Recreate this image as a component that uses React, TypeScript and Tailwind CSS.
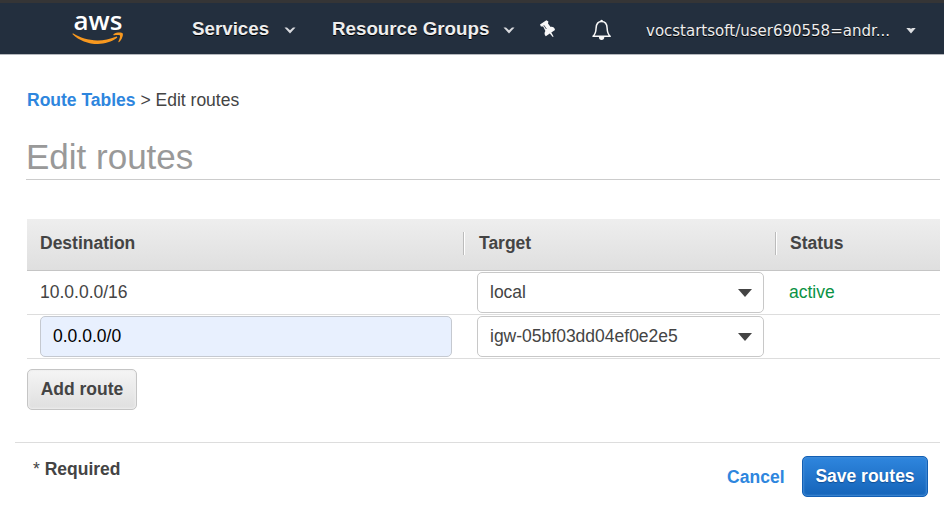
function NavCaret({ className }: { className: string }) {
  return (
    <svg className={className} width="12" height="8" viewBox="0 0 12 8">
      <path d="M0.5 0.5 L3 0.5 L6 3.2 L9 0.5 L11.5 0.5 L6 6.5 Z" fill="#d8dade" />
    </svg>
  );
}

function Logo() {
  return (
    <div className="ml-[71px] w-[54px] pt-[7px]">
      <div className="flex h-[20px] items-center justify-center font-['Open_Sans',sans-serif] text-[26px] leading-[20px] font-semibold text-white [text-shadow:none]">
        aws
      </div>
      <svg className="block" width="54" height="16" viewBox="0 0 54 16">
        <path
          d="M1.6 4.2 C1.2 3.7 1.7 3.2 2.4 3.6 C9 7.6 17 10.4 26.5 10.4 C33 10.4 39 9 44.8 6.7 C46 6.2 46.8 7.3 45.8 8.1 C41 11.8 33.5 14 27 14 C17 14 8 10.4 1.6 4.2 Z"
          fill="#f7981f"
        />
        <path
          d="M42.6 4.2 C45.8 2 50.8 2.4 51.6 3.3 C52.6 4.6 51.2 9.4 48.2 12 C47.6 12.4 47.2 12.1 47.4 11.5 C48.3 9.5 49.5 6.2 48.9 5.4 C48.2 4.6 44.9 5 43.2 5.2 C42.3 5.2 42 4.7 42.6 4.2 Z"
          fill="#f7981f"
        />
      </svg>
    </div>
  );
}

function Header() {
  return (
    <header className="flex h-[55px] items-start border-t-[3px] border-b border-t-[#353536] border-b-[#b5b8bd] bg-[#232f3e] text-[18.75px] font-bold text-[#eee] [text-shadow:0_1px_0_#000]">
      <Logo />
      <span className="ml-[67px] w-[92px] pt-[16px] leading-[20px] whitespace-nowrap">Services</span>
      <NavCaret className="mt-[24px]" />
      <span className="ml-[36px] w-[171px] pt-[16px] leading-[20px] whitespace-nowrap">Resource Groups</span>
      <NavCaret className="mt-[24px]" />
      <svg className="mt-[16px] ml-[24px]" width="18" height="19" viewBox="0 0 18 19">
        <path
          d="M1 5.6 L7.4 1.3 L9.4 2.6 L9 4.4 L11.6 7.9 C13.8 7.6 15.6 8.4 16 11 L12.3 13.5 L14.6 17.5 L13.8 18 L10.8 14.6 L6.8 17.3 C5.2 15.8 5.2 13.6 6.4 12 L4.2 7.6 L1.9 7.5 Z"
          fill="#f8f8f8"
        />
        <path d="M4.8 6.2 L7.4 10" stroke="#232f3e" strokeWidth="0.8" fill="none" />
      </svg>
      <svg className="mt-[16px] ml-[35px]" width="20" height="22" viewBox="0 0 20 22">
        <path
          d="M1 17.3 C3.3 15.4 3.9 13.3 4.1 9 C4.3 4.8 6.2 2.6 9.6 2.6 C13 2.6 14.9 4.8 15.1 9 C15.3 13.3 15.9 15.4 18.2 17.3 Z"
          fill="none"
          stroke="#f8f8f8"
          strokeWidth="1.5"
          strokeLinejoin="round"
        />
        <path d="M8.1 2.4 A1.5 1.6 0 0 1 11.1 2.4 M6.9 18 A2.7 3 0 0 0 12.3 18 Z" fill="#f8f8f8" />
      </svg>
      <span className="ml-[34px] w-[260px] pt-[18px] font-['DejaVu_Sans',sans-serif] text-[15px] leading-[20px] font-normal whitespace-nowrap">
        vocstartsoft/user690558=andr...
      </span>
      <svg className="mt-[25px]" width="10" height="6" viewBox="0 0 10 6">
        <path d="M0.3 0 H3.5 L5 0.8 L6.5 0 H9.7 L5 5.5 Z" fill="#dddfe2" />
      </svg>
    </header>
  );
}

function Select({ value }: { value: string }) {
  return (
    <div className="flex h-[41px] w-[287px] items-center justify-between rounded-[5px] border border-[#c8c8c8] bg-white pr-[11px] pl-[12px]">
      <span className="pb-[2px]">{value}</span>
      <svg width="14" height="8" viewBox="0 0 14 8">
        <path d="M0 0 H14 L7 8 Z" fill="#444" />
      </svg>
    </div>
  );
}

function Divider() {
  return <div className="h-[23px] w-[2px] border-l border-l-[#bbb] bg-white" />;
}

export default function App() {
  return (
    <div className="h-[516px] w-[944px] overflow-hidden bg-white font-['Liberation_Sans',Arial,sans-serif] text-[17.5px] leading-[20px] text-[#444]">
      <Header />
      <main className="pt-[35px] pr-[4px] pl-[27px]">
        <nav className="h-[20px] whitespace-nowrap">
          <a className="font-bold text-[#2e86de]">Route Tables</a> &gt; Edit routes
        </nav>
        <h1 className="-ml-px mt-[27px] h-[43px] border-b border-[#ccc] text-[35px] leading-[40px] text-[#999]">
          Edit routes
        </h1>
        <section className="mt-[39px]">
          <div className="flex h-[52px] items-center border-b border-[#c5c5c5] bg-linear-to-b from-[#eee] to-[#dfdfdf] pb-[3px] pl-[13px] font-bold">
            <span className="w-[423px]">Destination</span>
            <Divider />
            <span className="ml-[14px] w-[296px]">Target</span>
            <Divider />
            <span className="ml-[13px]">Status</span>
          </div>
          <div className="flex h-[44px] items-center border-b border-[#ddd] pl-[13px]">
            <span className="w-[437px] pb-[2px]">10.0.0.0/16</span>
            <Select value="local" />
            <span className="ml-[25px] pb-[2px] text-[#0a9245]">active</span>
          </div>
          <div className="flex h-[44px] items-center border-b border-[#ddd] pl-[13px]">
            <div className="mr-[25px] flex h-[41px] w-[412px] items-center rounded-[5px] border border-[#c5c9d0] bg-[#e8f0fe] pb-[2px] pl-[12px] text-black">
              0.0.0.0/0
            </div>
            <Select value="igw-05bf03dd04ef0e2e5" />
          </div>
          <button className="mt-[10px] block h-[41px] w-[110px] rounded-[5px] border border-[#c5c5c5] bg-linear-to-b from-[#f5f5f5] to-[#dfdfdf] pb-px font-bold whitespace-nowrap shadow-[inset_0_0_2px_1px_#eee]">
            Add route
          </button>
        </section>
      </main>
      <footer className="mt-[32px] mr-[4px] ml-[15px] flex items-start border-t border-[#ddd] pr-[12px]">
        <div className="mt-[16px] ml-[18px] flex-1">
          * <b>Required</b>
        </div>
        <a className="mt-[24px] mr-[17.5px] font-bold text-[#2e86de]">Cancel</a>
        <button className="mt-[13px] h-[41px] w-[126px] rounded-[5px] border border-[#125fb4] bg-linear-to-b from-[#2f86de] to-[#1464b9] pb-px font-bold whitespace-nowrap text-white shadow-[inset_0_0_2px_1px_#428bd6] [text-shadow:0_1px_1px_#104e94]">
          Save routes
        </button>
      </footer>
    </div>
  );
}
